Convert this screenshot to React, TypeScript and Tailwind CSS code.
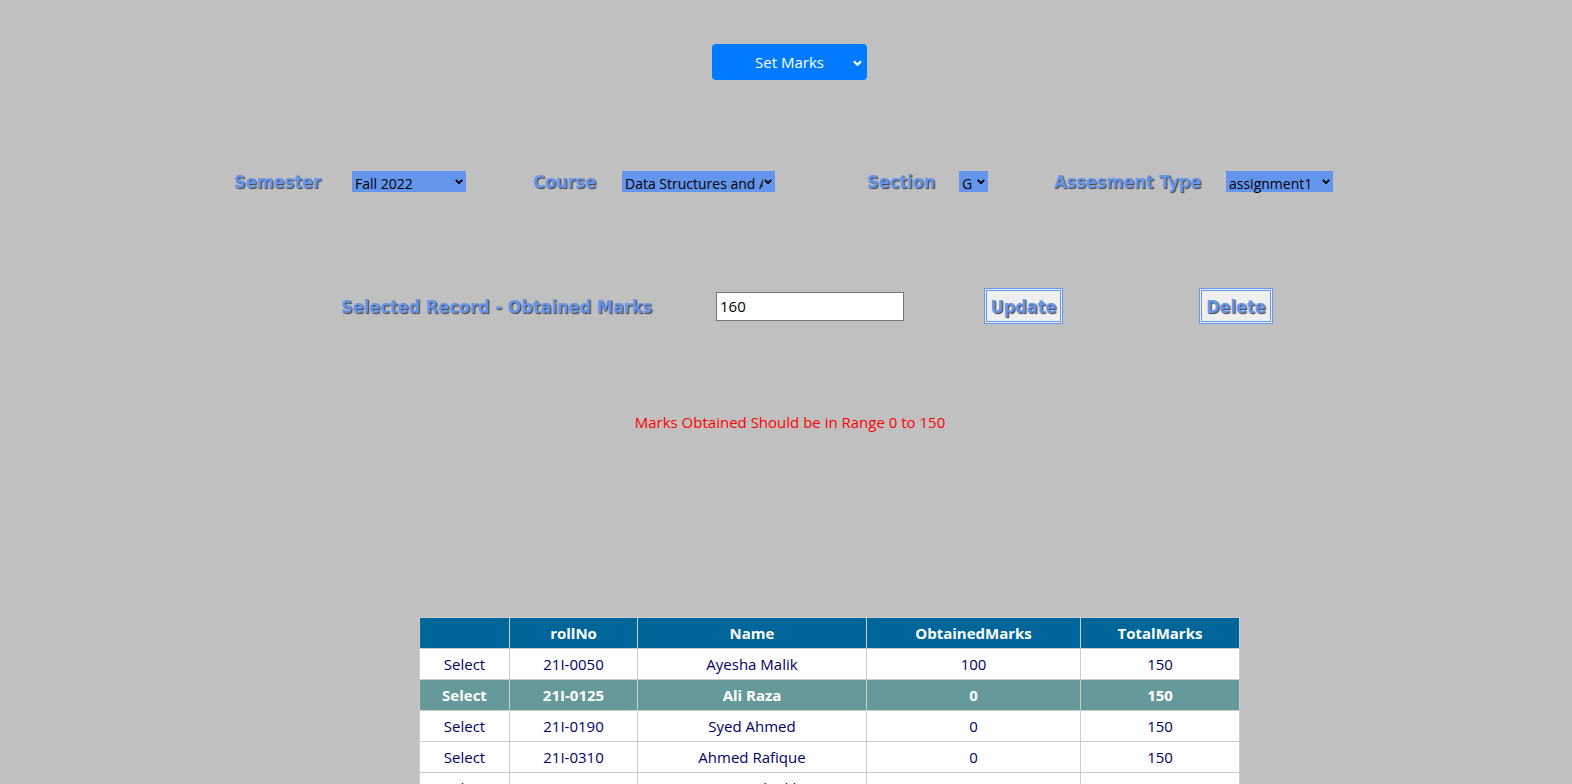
import React, { useState } from 'react';

interface Row {
  rollNo: string;
  name: string;
  obtained: number;
  total: number;
}

const ROWS: Row[] = [
  { rollNo: '21I-0050', name: 'Ayesha Malik', obtained: 100, total: 150 },
  { rollNo: '21I-0125', name: 'Ali Raza', obtained: 0, total: 150 },
  { rollNo: '21I-0190', name: 'Syed Ahmed', obtained: 0, total: 150 },
  { rollNo: '21I-0310', name: 'Ahmed Rafique', obtained: 0, total: 150 },
  { rollNo: '21I-0422', name: 'Hamza Sheikh', obtained: 0, total: 150 },
  { rollNo: '21I-0518', name: 'Fatima Noor', obtained: 0, total: 150 },
];

const labelCls =
  "font-['DejaVu_Sans_Condensed','DejaVu_Sans',sans-serif] font-bold text-[18px] text-[#6495ed] [text-shadow:1px_1px_1px_#3f3f3f] whitespace-nowrap";

const Chevron = ({ className }: { className?: string }) => (
  <svg viewBox="0 0 10 6" className={className} fill="none" stroke="currentColor" strokeWidth="2.4">
    <path d="M1 1l4 4 4-4" />
  </svg>
);

const BlueSelect = ({ value, options, width }: { value: string; options: string[]; width: string }) => (
  <div className={`relative h-[21px] bg-[#6495ed] ${width}`}>
    <select
      defaultValue={value}
      className="appearance-none w-full h-full bg-transparent pl-[3px] pr-[12px] text-[14px] text-black outline-none overflow-hidden whitespace-nowrap"
    >
      {options.map((o) => (
        <option key={o}>{o}</option>
      ))}
    </select>
    <Chevron className="absolute right-[3px] top-[8px] w-[8px] h-[5px] text-black pointer-events-none" />
  </div>
);

const App: React.FC = () => {
  const [selected] = useState(1);

  return (
    <div className="min-h-screen bg-[#c0c0c0] font-['Open_Sans','Noto_Sans',sans-serif] pt-[44px] pb-10">
      <div className="flex justify-center">
        <div className="relative w-[155px] h-[36px] ml-[7px] rounded-[4px] bg-[#007bff]">
          <select className="appearance-none w-full h-full bg-transparent text-white text-[15px] text-center outline-none">
            <option>Set Marks</option>
          </select>
          <Chevron className="absolute right-[5px] top-[16px] w-[9px] h-[6px] text-white pointer-events-none" />
        </div>
      </div>

      <div className="flex items-center ml-[234px] mt-[89px] h-[24px]">
        <div className="w-[118px]"><span className={labelCls}>Semester</span></div>
        <div className="w-[181px]"><BlueSelect value="Fall 2022" options={['Fall 2022', 'Spring 2023']} width="w-[114px]" /></div>
        <div className="w-[89px]"><span className={labelCls}>Course</span></div>
        <div className="w-[245px]"><BlueSelect value="Data Structures and Algorithms" options={['Data Structures and Algorithms']} width="w-[153px]" /></div>
        <div className="w-[92px]"><span className={labelCls}>Section</span></div>
        <div className="w-[95px]"><BlueSelect value="G" options={['G']} width="w-[29px]" /></div>
        <div className="w-[172px]"><span className={labelCls}>Assesment Type</span></div>
        <div className="w-[107px]"><BlueSelect value="assignment1" options={['assignment1']} width="w-[107px]" /></div>
      </div>

      <div className="flex items-center ml-[341px] mt-[95px] h-[36px]">
        <div className="w-[375px]"><span className={labelCls}>Selected Record - Obtained Marks</span></div>
        <div className="w-[268px]">
          <input
            defaultValue="160"
            className="w-[188px] h-[29px] bg-white border border-[#767676] px-[3px] text-[15px] text-black outline-none"
          />
        </div>
        <div className="w-[215px]">
          <button className={`w-[79px] h-[36px] bg-[#efefef] border-[3px] border-double border-[#6495ed] ${labelCls}`}>Update</button>
        </div>
        <button className={`w-[74px] h-[36px] bg-[#efefef] border-[3px] border-double border-[#6495ed] ${labelCls}`}>Delete</button>
      </div>

      <p className="mt-[86px] h-[24px] leading-[24px] text-center text-[15px] text-[#ff0000] ml-[8px]">
        Marks Obtained Should be in Range 0 to 150
      </p>

      <div className="flex mt-[183px] ml-[419px]">
        <table className="border-collapse text-[15px] text-center">
          <thead>
            <tr className="bg-[#006699] text-white font-bold h-[31px]">
              <th className="w-[90px] border border-[#cccccc]"></th>
              <th className="w-[128px] border border-[#cccccc]">rollNo</th>
              <th className="w-[229px] border border-[#cccccc]">Name</th>
              <th className="w-[214px] border border-[#cccccc]">ObtainedMarks</th>
              <th className="w-[159px] border border-[#cccccc]">TotalMarks</th>
            </tr>
          </thead>
          <tbody>
            {ROWS.map((r, i) => {
              const sel = i === selected;
              const rowCls = sel ? 'bg-[#669999] text-white font-bold' : 'bg-white text-[#000066]';
              return (
                <tr key={r.rollNo} className={`h-[31px] ${rowCls}`}>
                  <td className="border border-[#cccccc]">Select</td>
                  <td className="border border-[#cccccc]">{r.rollNo}</td>
                  <td className="border border-[#cccccc]">{r.name}</td>
                  <td className="border border-[#cccccc]">{r.obtained}</td>
                  <td className="border border-[#cccccc]">{r.total}</td>
                </tr>
              );
            })}
          </tbody>
        </table>
      </div>
    </div>
  );
};

export default App;
